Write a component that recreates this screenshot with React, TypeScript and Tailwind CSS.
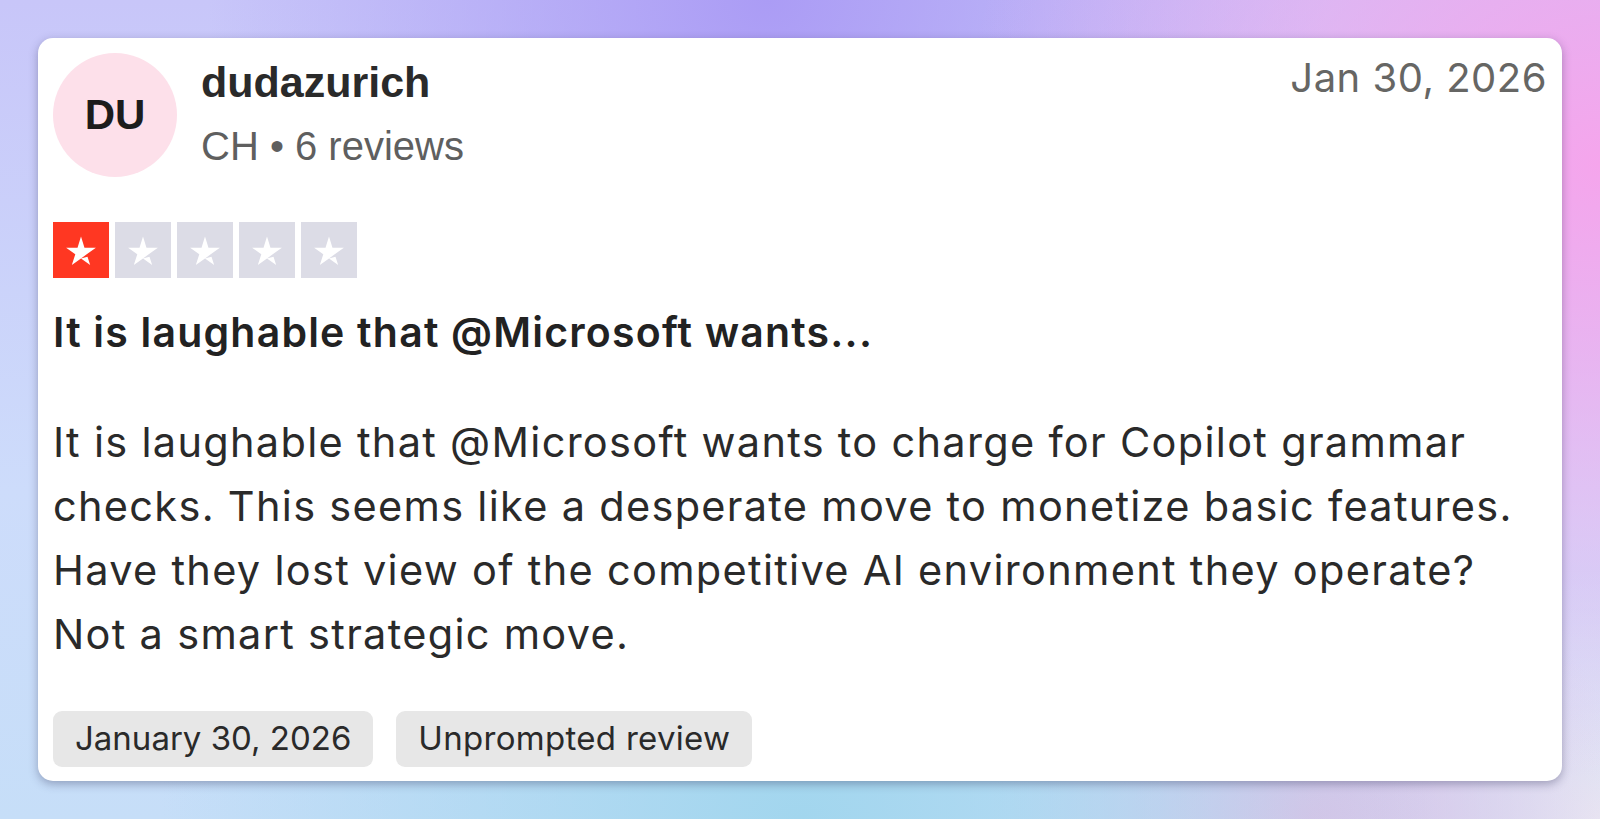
import React from 'react';

const Star = () => (
  <svg viewBox="0 0 24 24" className="w-[38px] h-[38px]" fill="#ffffff">
    <path d="M12 17.3l4.1-1.05 1.7 5.25L12 17.3zm9.4-6.8h-7.2L12 3.5l-2.2 7H2.6l5.8 4.2-2.2 6.8 5.8-4.2 3.6-2.6 5.8-4.2z" />
  </svg>
);

export default function App() {
  const rating = 1;

  return (
    <div className="w-full h-[819px] p-[38px] bg-[radial-gradient(ellipse_40%_75%_at_100%_20%,#f5a5ec_0%,transparent_100%),radial-gradient(ellipse_35%_60%_at_48%_0%,#ab9cf5_0%,transparent_100%),radial-gradient(ellipse_40%_55%_at_50%_100%,#a2d6ee_0%,transparent_100%),radial-gradient(ellipse_20%_35%_at_82%_100%,#dcc2e6_0%,transparent_100%),radial-gradient(ellipse_15%_30%_at_100%_100%,#e9e7f3_0%,transparent_100%),linear-gradient(to_bottom,#c8c6f9,#cddcfb_60%,#c6def8)]">
      {/* Review card */}
      <div className="h-full bg-white rounded-[15px] shadow-[0_3px_10px_rgba(40,40,80,0.35)] px-[15px] pt-[15px] flex flex-col font-['Inter',sans-serif]">
        {/* Header */}
        <div className="flex items-start">
          <div className="w-[124px] h-[124px] rounded-full bg-[#fde0ea] flex items-center justify-center shrink-0">
            <span className="font-['Liberation_Sans',sans-serif] font-bold text-[42px] text-[#1c1c1c] leading-none">DU</span>
          </div>
          <div className="ml-[24px] mt-[5px] flex flex-col gap-[16px] font-['Liberation_Sans',sans-serif]">
            <span className="text-[43px] leading-[48px] font-bold text-[#2a2a2a]">dudazurich</span>
            <span className="text-[40px] leading-[48px] text-[#5f5f5f]">CH • 6 reviews</span>
          </div>
          <span className="ml-auto mt-[1px] text-[40px] leading-[48px] text-[#666664] tracking-[0.5px]">Jan 30, 2026</span>
        </div>

        {/* Stars */}
        <div className="flex gap-[6px] mt-[45px]">
          {[1, 2, 3, 4, 5].map((i) => (
            <div
              key={i}
              className={
                i <= rating
                  ? 'w-[56px] h-[56px] bg-[#ff3722] flex items-center justify-center'
                  : 'w-[56px] h-[56px] bg-[#dcdce6] flex items-center justify-center'
              }
            >
              <Star />
            </div>
          ))}
        </div>

        {/* Title */}
        <h2 className="mt-[30px] text-[41px] leading-[48px] font-semibold tracking-[1.2px] text-[#222222]">
          It is laughable that @Microsoft wants...
        </h2>

        {/* Body */}
        <p className="mt-[54px] text-[41.5px] leading-[64px] tracking-[1.3px] text-[#2a2a2a]">
          It is laughable that @Microsoft wants to charge for Copilot grammar checks. This seems like a desperate move to
          monetize basic features. Have they lost view of the competitive AI environment they operate? Not a smart
          strategic move.
        </p>

        {/* Tags */}
        <div className="flex gap-[23px] mt-auto mb-[14px]">
          <span className="h-[56px] px-[22px] rounded-[9px] bg-[#e7e7e7] text-[33px] text-[#2a2a2a] flex items-center">
            January 30, 2026
          </span>
          <span className="h-[56px] px-[22px] rounded-[9px] bg-[#e7e7e7] text-[33px] tracking-[0.3px] text-[#2a2a2a] flex items-center">
            Unprompted review
          </span>
        </div>
      </div>
    </div>
  );
}
